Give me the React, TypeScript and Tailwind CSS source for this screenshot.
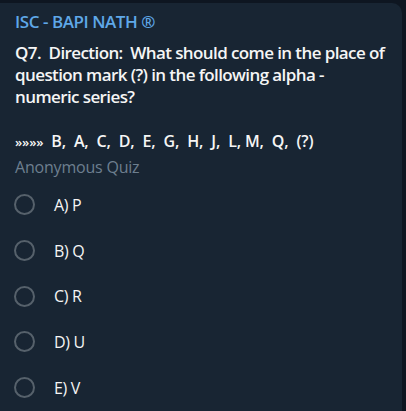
import React from "react";

const options = ["A) P", "B) Q", "C) R", "D) U", "E) V"];

export default function App() {
  return (
    <div className="w-[406px] h-[411px] bg-[#0e1621] overflow-hidden pt-[3px]" style={{ fontFamily: '"Open Sans", sans-serif' }}>
      <div className="w-[402px] h-[420px] bg-[#182533] rounded-tr-[10px] pl-[15px] pt-[8px]">
        <div className="text-[17px] leading-[22px] font-semibold text-[#5fa8e8] tracking-[-0.45px]">ISC - BAPI NATH ®</div>
        <div className="mt-[9px] text-[17px] leading-[22px] font-semibold text-[#f5f5f5] whitespace-pre tracking-[-0.6px]">
          {"Q7.  Direction:  What should come in the place of"}
          <br />
          {"question mark (?) in the following alpha -"}
          <br />
          {"numeric series?"}
        </div>
        <div className="mt-[22px] text-[16px] leading-[22px] font-semibold text-[#f5f5f5] whitespace-pre tracking-[-0.15px]">
          <span className="text-[13px]">»»»»</span>{"  B,  A,  C,  D,  E,  G,  H,  J,  L, M,  Q,  (?)"}
        </div>
        <div className="mt-[4px] text-[16px] leading-[20px] text-[#6d7f8f] tracking-[-0.2px]">Anonymous Quiz</div>
        <div className="mt-[5px] flex flex-col">
          {options.map((o) => (
            <div key={o} className="h-[45.7px] flex items-center">
              <div className="w-[21px] h-[21px] rounded-full border-2 border-[#56616b] shrink-0 -ml-[1px]" />
              <span className="ml-[19px] text-[16px] text-[#f5f5f5] tracking-[-0.3px]">{o}</span>
            </div>
          ))}
        </div>
      </div>
    </div>
  );
}
